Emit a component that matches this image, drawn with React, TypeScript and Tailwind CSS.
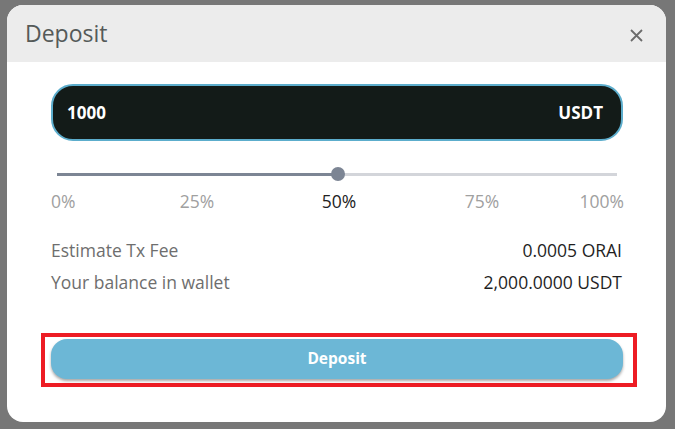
import React from "react";

export default function App() {
  const marks = [
    { label: "0%", pos: "left-[-6px]", active: false },
    { label: "25%", pos: "left-[25%] -translate-x-1/2", active: false },
    { label: "50%", pos: "left-[calc(50%+2px)] -translate-x-1/2", active: true },
    { label: "75%", pos: "left-[calc(75%+5px)] -translate-x-1/2", active: false },
    { label: "100%", pos: "right-[-7px]", active: false },
  ];
  return (
    <div
      className="w-[675px] h-[429px] bg-[#777777] pl-[7px] pt-[5px]"
      style={{ fontFamily: '"Open Sans", "Noto Sans", sans-serif' }}
    >
      <div className="w-[659px] h-[417px] bg-white rounded-[16px] overflow-hidden flex flex-col">
        <div className="h-[57px] bg-[#ececec] flex items-center justify-between pl-[18px] pr-[23px] shrink-0">
          <span className="text-[23px] text-[#555a59] leading-none">Deposit</span>
          <svg width="13" height="13" viewBox="0 0 13 13" className="mt-[3px]">
            <path d="M1 1L12 12M12 1L1 12" stroke="#6b6b6b" strokeWidth="1.8" />
          </svg>
        </div>
        <div className="flex flex-col pl-[44px] pr-[43px] pt-[22px]">
          <div className="h-[57px] rounded-[22px] bg-[#131b18] border-2 border-[#5cadcc] flex items-center justify-between pl-[14px] pr-[18px]">
            <span className="text-white text-[17px] font-bold">1000</span>
            <span className="text-white text-[17px] font-bold">USDT</span>
          </div>
          <div className="relative mx-[6px] mt-[26px] h-[14px] flex items-center">
            <div className="w-[50.2%] h-[3px] bg-[#7c8594]" />
            <div className="flex-1 h-[3px] bg-[#d3d5da]" />
            <div className="absolute left-[50.2%] top-1/2 -translate-x-1/2 -translate-y-1/2 w-[14px] h-[14px] rounded-full bg-[#7c8594]" />
          </div>
          <div className="relative mx-[6px] h-[26px] mt-[7px]">
            {marks.map((m) => (
              <span
                key={m.label}
                className={`absolute top-0 leading-[26px] ${m.pos} text-[17.5px] ${m.active ? "text-[#222222]" : "text-[#a0a0a0]"}`}
              >
                {m.label}
              </span>
            ))}
          </div>
          <div className="mt-[25px] flex flex-col gap-[10px] pr-[1px]">
            <div className="flex justify-between items-center h-[22px]">
              <span className="text-[17.5px] text-[#6e6e6e]">Estimate Tx Fee</span>
              <span className="text-[17.5px] text-[#1f1f1f]">0.0005 ORAI</span>
            </div>
            <div className="flex justify-between items-center h-[22px]">
              <span className="text-[17.5px] text-[#6e6e6e]">Your balance in wallet</span>
              <span className="text-[17.5px] text-[#1f1f1f]">2,000.0000 USDT</span>
            </div>
          </div>
        </div>
        <div className="ml-[34px] mt-[40px] w-[596px] h-[54px] border-[4px] border-[#ed1c24] pl-[6px] pr-[10px] pt-[2px]">
          <div className="h-[40px] rounded-[16px] bg-[#6cb7d6] shadow-[0_2px_3px_rgba(0,0,0,0.35)] flex items-center justify-center">
            <span className="text-white text-[15.5px] font-bold">Deposit</span>
          </div>
        </div>
      </div>
    </div>
  );
}
